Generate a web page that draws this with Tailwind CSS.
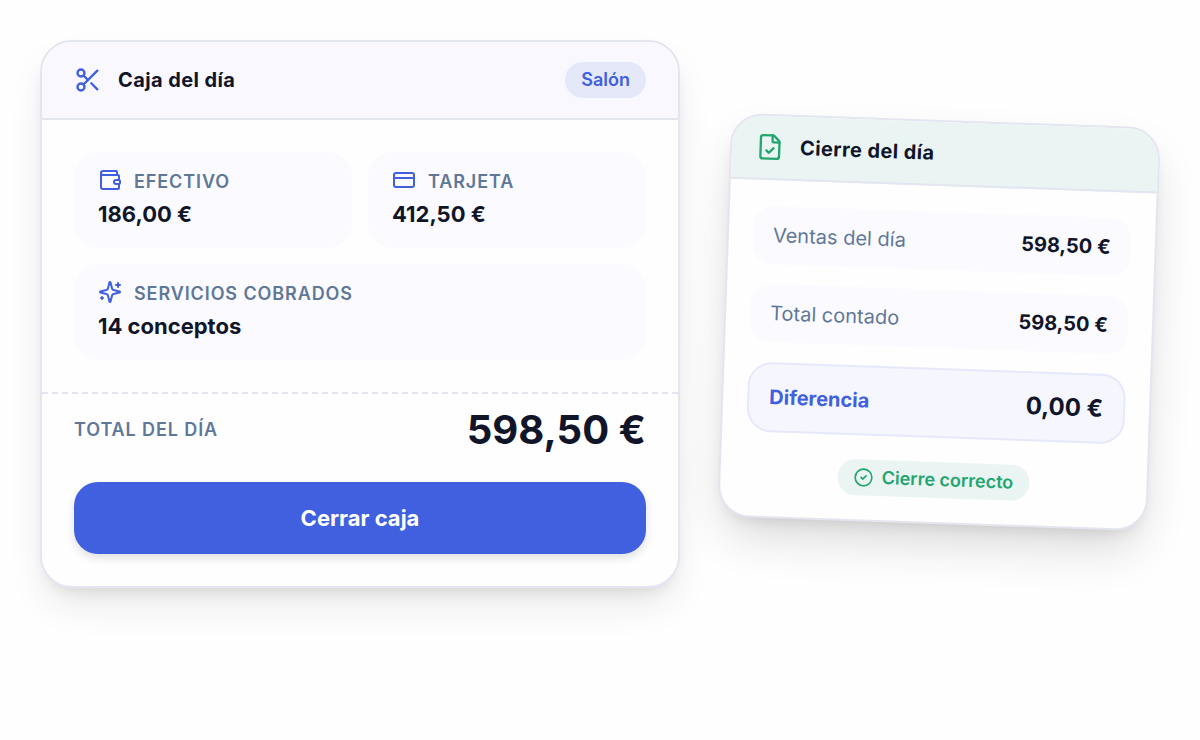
<!DOCTYPE html>
<html lang="es">
<head>
    <meta charset="UTF-8">
    <meta name="viewport" content="width=device-width, initial-scale=1.0">
    <title>Caja del día</title>
    <script src="https://cdn.jsdelivr.net/npm/@tailwindcss/browser@4"></script>
</head>
<body class="bg-[#fefefe] min-h-screen p-10 font-['Inter',sans-serif] text-[#11152a] antialiased">
    <main class="grid grid-cols-[16fr_11fr] items-start gap-10">
        <!-- Caja -->
        <section class="rounded-[32px] border-2 border-[#e3e5f0] bg-[#fefefe] shadow-[0_20px_40px_-8px_rgba(0,0,0,0.11),0_8px_16px_-8px_rgba(0,0,0,0.12)] overflow-hidden">
            <header class="flex items-center justify-between border-b-2 border-[#e3e5f0] bg-[#f8f8fe] px-8 py-5">
                <div class="flex items-center gap-4">
                    <svg class="w-7 h-7 text-[#4060df]" viewBox="0 0 24 24" fill="none" stroke="currentColor" stroke-width="2" stroke-linecap="round" stroke-linejoin="round">
                        <circle cx="6" cy="6" r="3"/>
                        <path d="M8.12 8.12 12 12"/>
                        <path d="M20 4 8.12 15.88"/>
                        <circle cx="6" cy="18" r="3"/>
                        <path d="M14.8 14.8 20 20"/>
                    </svg>
                    <h1 class="text-[20px] leading-7 font-bold tracking-[0.02em]">Caja del día</h1>
                </div>
                <span class="rounded-full bg-[#e5e8f9] px-4 text-[18px] leading-9 font-semibold text-[#4060df]">Salón</span>
            </header>

            <div class="grid grid-cols-2 gap-4 p-8">
                <div class="rounded-[24px] bg-[#fbfbff] px-6 py-4">
                    <div class="flex items-start gap-3 text-[18px] leading-7 font-semibold tracking-wider text-[#5f7898]">
                        <svg class="w-6 h-6 text-[#4060df]" viewBox="0 0 24 24" fill="none" stroke="currentColor" stroke-width="2" stroke-linecap="round" stroke-linejoin="round">
                            <path d="M19 7V4a1 1 0 0 0-1-1H5a2 2 0 0 0 0 4h15a1 1 0 0 1 1 1v4h-3a2 2 0 0 0 0 4h3a1 1 0 0 0 1-1v-2a1 1 0 0 0-1-1"/>
                            <path d="M3 5v14a2 2 0 0 0 2 2h15a1 1 0 0 0 1-1v-4"/>
                        </svg>
                        EFECTIVO
                    </div>
                    <div class="text-[22px] leading-9 font-bold">186,00 €</div>
                </div>
                <div class="rounded-[24px] bg-[#fbfbff] px-6 py-4">
                    <div class="flex items-start gap-3 text-[18px] leading-7 font-semibold tracking-wider text-[#5f7898]">
                        <svg class="w-6 h-6 text-[#4060df]" viewBox="0 0 24 24" fill="none" stroke="currentColor" stroke-width="2" stroke-linecap="round" stroke-linejoin="round">
                            <rect width="20" height="14" x="2" y="5" rx="2"/>
                            <path d="M2 10h20"/>
                        </svg>
                        TARJETA
                    </div>
                    <div class="text-[22px] leading-9 font-bold">412,50 €</div>
                </div>
                <div class="col-span-2 rounded-[24px] bg-[#fbfbff] px-6 py-4">
                    <div class="flex items-start gap-3 text-[18px] leading-7 font-semibold tracking-wider text-[#5f7898]">
                        <svg class="w-6 h-6 text-[#4060df]" viewBox="0 0 24 24" fill="none" stroke="currentColor" stroke-width="2" stroke-linecap="round" stroke-linejoin="round">
                            <path d="M9.937 15.5A2 2 0 0 0 8.5 14.063l-6.135-1.582a.5.5 0 0 1 0-.962L8.5 9.936A2 2 0 0 0 9.937 8.5l1.582-6.135a.5.5 0 0 1 .963 0L14.063 8.5A2 2 0 0 0 15.5 9.937l6.135 1.581a.5.5 0 0 1 0 .964L15.5 14.063a2 2 0 0 0-1.437 1.437l-1.582 6.135a.5.5 0 0 1-.963 0z"/>
                            <path d="M20 3v4"/>
                            <path d="M22 5h-4"/>
                            <path d="M4 17v2"/>
                            <path d="M5 18H3"/>
                        </svg>
                        SERVICIOS COBRADOS
                    </div>
                    <div class="text-[22px] leading-9 font-bold">14 conceptos</div>
                </div>
            </div>

            <footer class="border-t-2 border-dashed border-[#e3e5f0] px-8 pt-4 pb-8">
                <div class="flex items-center justify-between mb-8">
                    <span class="text-[18px] leading-7 font-semibold tracking-wider text-[#5f7898]">TOTAL DEL DÍA</span>
                    <span class="text-[40px] leading-10 font-bold">598,50 €</span>
                </div>
                <button type="button" class="w-full h-[72px] rounded-[24px] bg-[#4060df] text-[22px] font-bold text-white shadow-[0_4px_8px_rgba(0,0,0,0.12)]">Cerrar caja</button>
            </footer>
        </section>

        <!-- Cierre -->
        <section class="ml-1 mr-[6px] mt-20 rotate-2 rounded-[32px] border-2 border-[#e3e5f0] bg-[#fefefe] shadow-[0_24px_48px_-8px_rgba(0,0,0,0.16),0_8px_16px_-8px_rgba(0,0,0,0.12)] overflow-hidden">
            <header class="flex items-center gap-4 border-b-2 border-[#e3e5f0] bg-[#eaf5f3] px-6 py-4">
                <svg class="w-7 h-7 text-[#22a56e]" viewBox="0 0 24 24" fill="none" stroke="currentColor" stroke-width="2" stroke-linecap="round" stroke-linejoin="round">
                    <path d="M6 22a2 2 0 0 1-2-2V4a2 2 0 0 1 2-2h8a2.4 2.4 0 0 1 1.704.706l3.588 3.588A2.4 2.4 0 0 1 20 8v12a2 2 0 0 1-2 2z"/>
                    <path d="M14 2v5a1 1 0 0 0 1 1h5"/>
                    <path d="m9 15 2 2 4-4"/>
                </svg>
                <h2 class="text-[20px] leading-[30px] font-bold tracking-[0.02em]">Cierre del día</h2>
            </header>

            <div class="flex flex-col gap-5 px-6 pt-[26px] pb-6">
                <div class="flex items-center justify-between rounded-[20px] bg-[#fbfbff] px-5 h-[58px]">
                    <span class="text-[20px] text-[#5f7898]">Ventas del día</span>
                    <span class="text-[20px] font-bold">598,50 €</span>
                </div>
                <div class="flex items-center justify-between rounded-[20px] bg-[#fbfbff] px-5 h-[58px]">
                    <span class="text-[20px] text-[#5f7898]">Total contado</span>
                    <span class="text-[20px] font-bold">598,50 €</span>
                </div>
                <div class="flex items-center justify-between rounded-[24px] border-2 border-[#e6e8fc] bg-[#f6f6ff] px-5 h-[70px]">
                    <span class="text-[20px] font-bold text-[#4060df]">Diferencia</span>
                    <span class="text-[24px] font-bold">0,00 €</span>
                </div>
                <div class="mt-1 flex justify-center">
                    <span class="flex items-center gap-2 rounded-full bg-[#eaf5f3] px-4 text-[18px] leading-9 font-semibold text-[#22a56e]">
                        <svg class="w-5 h-5" viewBox="0 0 24 24" fill="none" stroke="currentColor" stroke-width="2" stroke-linecap="round" stroke-linejoin="round">
                            <circle cx="12" cy="12" r="10"/>
                            <path d="m9 12 2 2 4-4"/>
                        </svg>
                        Cierre correcto
                    </span>
                </div>
            </div>
        </section>
    </main>
</body>
</html>
